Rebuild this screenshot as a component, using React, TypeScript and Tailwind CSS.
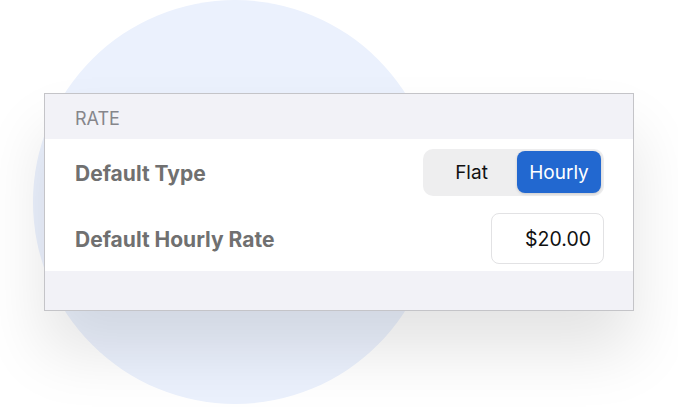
export default function App() {
  return (
    <div className="relative h-[411px] w-[678px] overflow-hidden bg-white font-['Inter',sans-serif]">
      <div className="absolute left-[33px] top-0 h-[404px] w-[404px] rounded-full bg-[#ebf1fd]" />
      <div className="relative pl-[44px] pt-[93px]">
        <div className="w-[590px] border border-[#c4c4c8] bg-[#f2f2f7] shadow-[0_40px_60px_rgba(0,0,0,0.11)]">
          <div className="flex h-[45px] items-center pl-[30px] pt-[3px] text-[18px] uppercase text-[#86868b]">
            Rate
          </div>
          <div className="bg-white pl-[30px] pr-[29px]">
            <div className="flex h-[66px] items-center justify-between">
              <span className="pt-[3px] text-[21px] font-bold text-[#707070]">Default Type</span>
              <div className="flex h-[47px] w-[181px] items-center rounded-[10px] bg-[#eeeeef] p-[3px]">
                <button type="button" className="flex h-full flex-1 items-center justify-center pt-[3px] text-[19px] text-[#111]">
                  Flat
                </button>
                <button
                  type="button"
                  className="flex h-[42px] w-[84px] items-center justify-center rounded-[8px] bg-[#2268d0] pt-[3px] text-[19px] text-white shadow-[0_1px_3px_rgba(0,0,0,0.15)]"
                >
                  Hourly
                </button>
              </div>
            </div>
            <div className="flex h-[66px] items-center justify-between">
              <span className="pt-[3px] text-[21px] font-bold text-[#707070]">Default Hourly Rate</span>
              <div className="flex h-[51px] w-[113px] items-center justify-end rounded-[8px] border border-[#e2e2e4] pr-[12px] pt-[3px] text-[19.5px] text-[#111]">
                $20.00
              </div>
            </div>
          </div>
          <div className="h-[39px]" />
        </div>
      </div>
    </div>
  );
}
